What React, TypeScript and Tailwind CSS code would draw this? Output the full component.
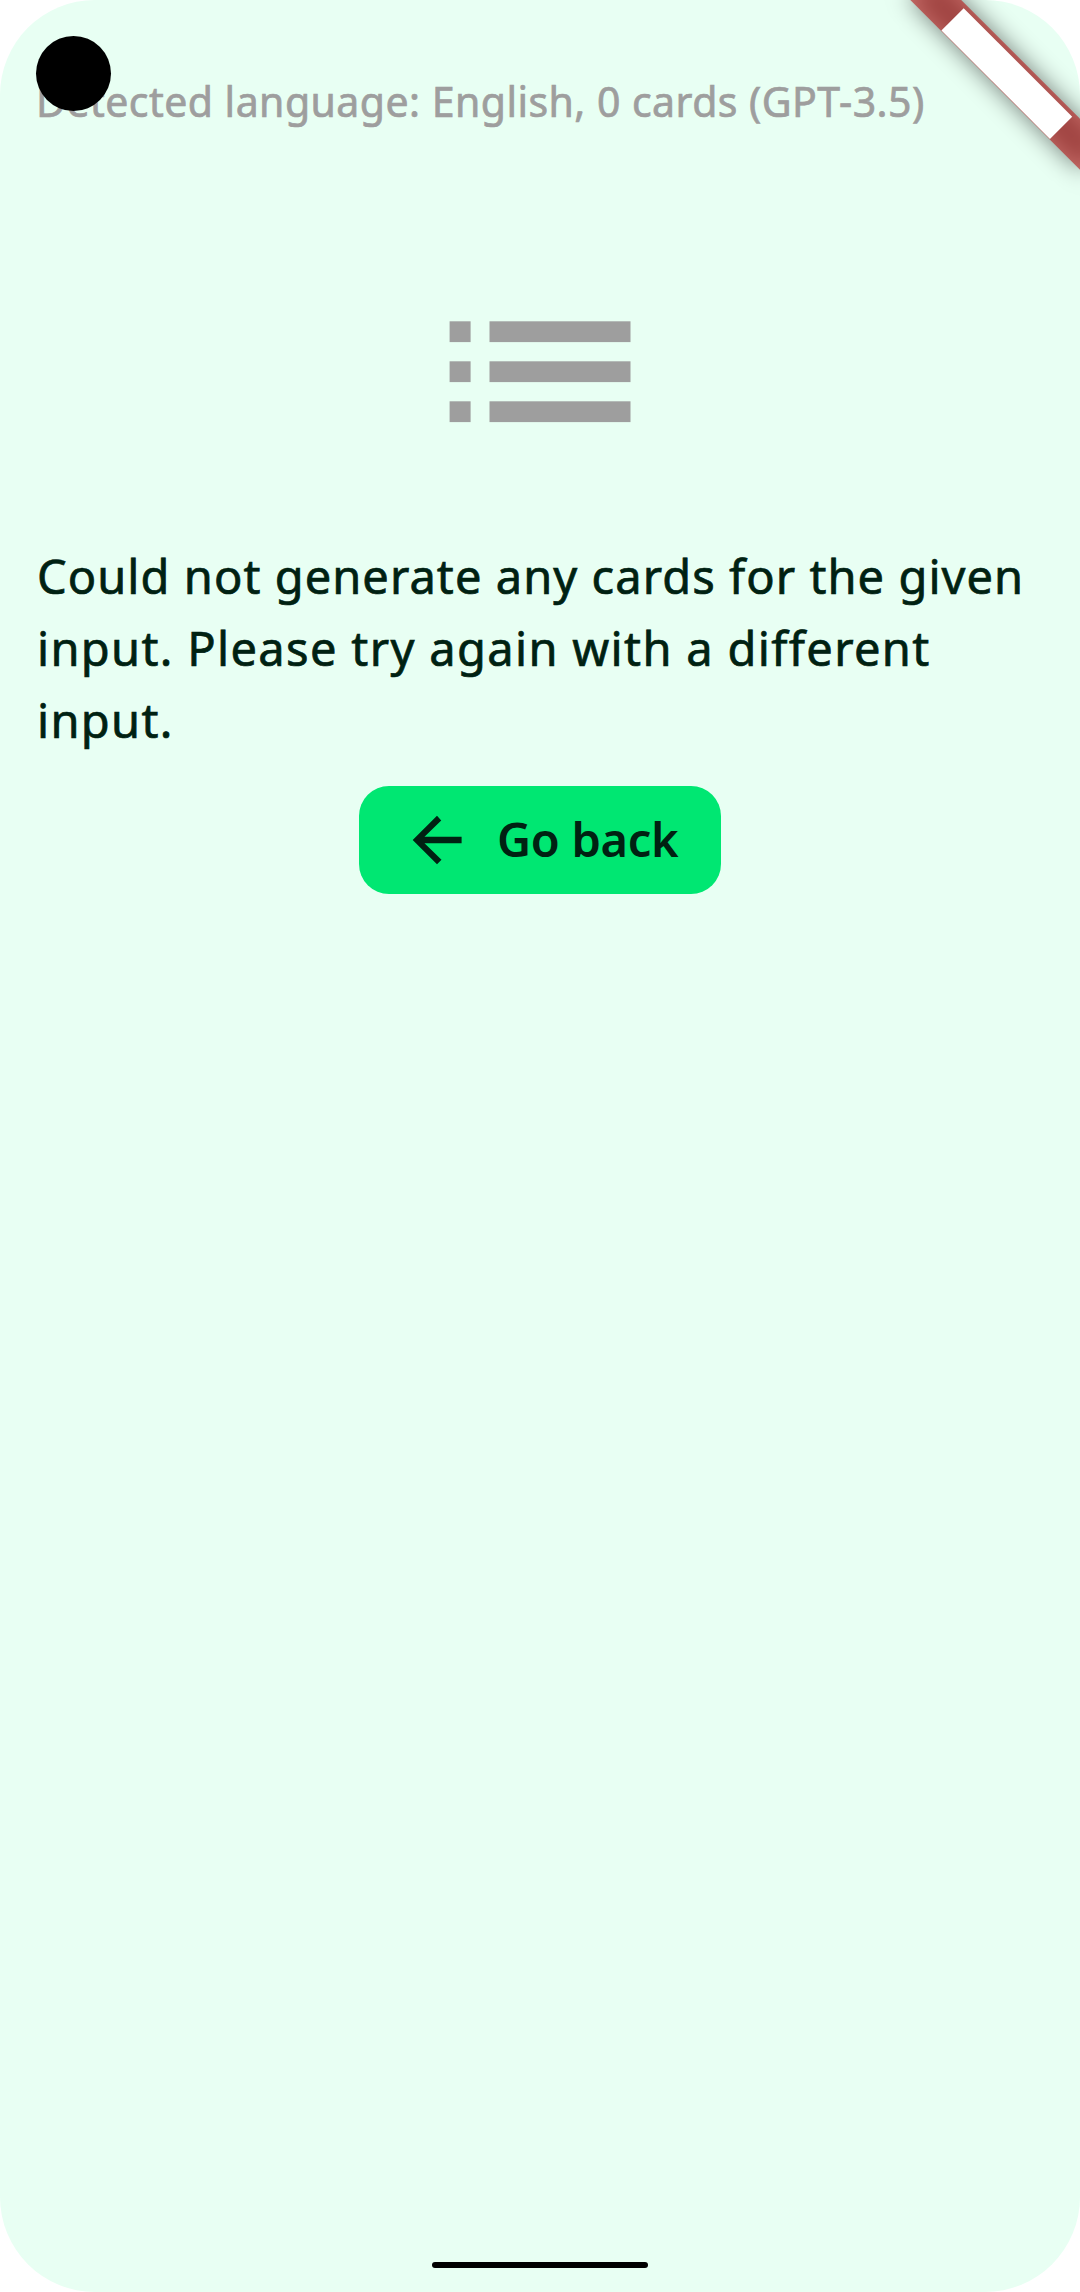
function ListIcon() {
  return (
    <svg viewBox="0 0 240 240" className="size-60 fill-[#9e9e9e]" aria-hidden="true">
      {[70.3, 110.3, 150.3].map((y) => (
        <g key={y}>
          <rect x="29.6" y={y} width="21" height="20.8" />
          <rect x="69.5" y={y} width="141" height="20.8" />
        </g>
      ))}
    </svg>
  );
}

function BackIcon() {
  return (
    <svg viewBox="0 0 24 24" className="size-[72px] fill-current" aria-hidden="true">
      <path d="M20.2 10.9H7.83l5.59-5.4L12 3.9l-8.1 8.1 8.1 8.1 1.5-1.5L7.83 13.1H20.2z" />
    </svg>
  );
}

function CornerBanner() {
  return (
    <svg viewBox="0 0 300 300" className="absolute top-0 right-0 size-[300px]" aria-hidden="true">
      <defs>
        <filter id="soft" x="-100" y="-100" width="600" height="400" filterUnits="userSpaceOnUse">
          <feGaussianBlur stdDeviation="12" />
        </filter>
      </defs>
      <g transform="translate(300 0) rotate(45)">
        <g transform="translate(-120 84)">
          <rect width="240" height="36" fill="#000" fillOpacity="0.5" filter="url(#soft)" />
          <rect width="240" height="36" fill="#b71c1c" fillOpacity="0.627" />
          <rect x="43.5" y="4" width="153.5" height="31.5" fill="#fff" />
        </g>
      </g>
    </svg>
  );
}

export default function App() {
  return (
    <div className="h-[2292px] w-[1080px] overflow-hidden bg-white">
      <main className="relative flex h-full w-full flex-col overflow-hidden rounded-[95px] bg-[#e8fff3] px-9 pt-[71px] font-['Noto_Sans',sans-serif] text-[#002112]">
        <p className="text-[41px] leading-[60px] tracking-[0.46px] whitespace-nowrap text-[#9e9e9e] [-webkit-text-stroke:0.7px]">
          Detected language: English, 0 cards (GPT-3.5)
        </p>

        <section className="mt-[120px] flex flex-col items-center">
          <ListIcon />
          <p className="mt-[49px] flex w-full flex-col pl-px text-[47px] leading-[72px] whitespace-nowrap [-webkit-text-stroke:0.7px]">
            <span className="tracking-[1.06px]">Could not generate any cards for the given </span>
            <span className="tracking-[1.34px]">input. Please try again with a different </span>
            <span className="tracking-[1.34px]">input.</span>
          </p>
          <button className="mt-[30px] flex h-[108px] w-[362px] items-center gap-6 rounded-[30px] bg-[#00e772] pl-[42px]">
            <BackIcon />
            <span className="-mt-[3px] text-[47px] leading-[72px] font-semibold tracking-[-0.3px] whitespace-nowrap">Go back</span>
          </button>
        </section>

        <div className="mx-auto mt-auto mb-6 h-1.5 w-[216px] rounded-full bg-black" />

        <CornerBanner />
        <div className="absolute top-9 left-9 size-[75px] rounded-full bg-black" />
      </main>
    </div>
  );
}
